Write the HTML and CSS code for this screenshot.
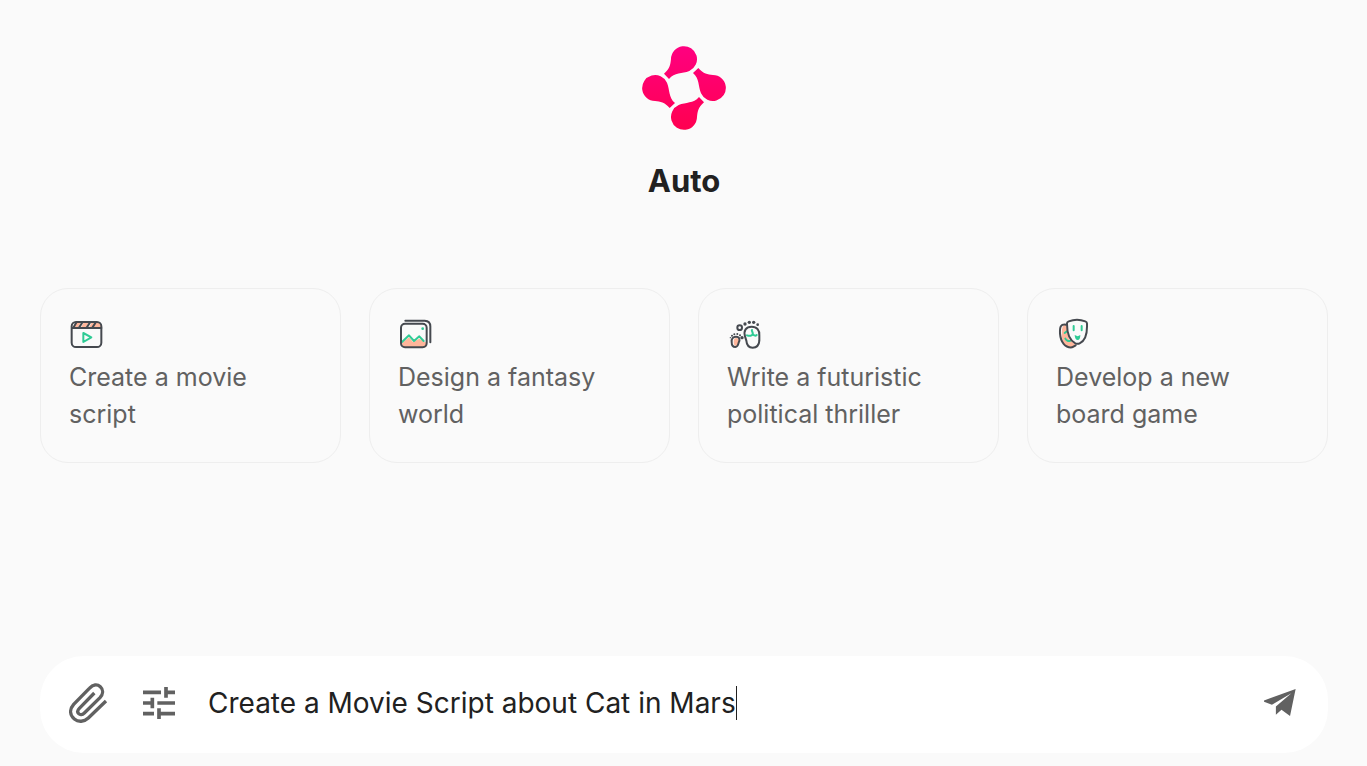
FILE: index.html
```html
<!DOCTYPE html>
<html lang="en">
<head>
<meta charset="utf-8">
<meta name="viewport" content="width=device-width, initial-scale=1">
<title>Auto</title>
<link rel="stylesheet" href="styles.css">
</head>
<body>
<main class="page">
  <header class="hero">
    <svg class="logo" viewBox="24 24 252 252" aria-hidden="true">
      <defs>
        <linearGradient id="pink" gradientUnits="userSpaceOnUse" x1="150" y1="24" x2="150" y2="276">
          <stop offset="0" stop-color="#ff0080"/>
          <stop offset="1" stop-color="#ff0050"/>
        </linearGradient>
        <clipPath id="petals">
          <path id="petal" d="M111 63A39 39 0 1 1 166 99C144 108 122 103 105 123L90 107C108 91 109 80 111 63Z"/>
          <use href="#petal" transform="rotate(90 150 150)"/>
          <use href="#petal" transform="rotate(180 150 150)"/>
          <use href="#petal" transform="rotate(270 150 150)"/>
        </clipPath>
      </defs>
      <rect x="24" y="24" width="252" height="252" fill="url(#pink)" clip-path="url(#petals)"/>
    </svg>
    <h1 class="title">Auto</h1>
  </header>

  <section class="cards" aria-label="Suggestions">
    <button class="card" type="button">
      <svg class="card-icon" viewBox="27 21 102 102" aria-hidden="true">
        <path class="peach" d="M36 54V47Q37 36 48 36H111Q123 37 124 54Z"/>
        <path class="paper" d="M36 48Q37 36 48 36L40 54H36ZM64 36H72L62 54H52ZM88 36H96L86 54H76Z"/>
        <path class="ink" d="M50 36L40 53M68 36L57 53M91 36L80 53M108 36L97 53M36 54H124"/>
        <rect class="ink" x="35" y="36" width="89" height="75" rx="13"/>
        <path class="mint" d="M70 69V96L94 82Z"/>
      </svg>
      <span class="card-text">Create a movie script</span>
    </button>
    <button class="card" type="button">
      <svg class="card-icon" viewBox="24 21 102 102" aria-hidden="true">
        <path class="peach" d="M36 99L57 82L69 96L88 86L109 98V111Q106 113 100 113H46Q37 112 36 99Z"/>
        <path class="mint" d="M36 96L57 76L72 93L88 79L101 93"/>
        <circle class="mint-fill" cx="98" cy="56" r="4"/>
        <rect class="ink" x="33" y="41" width="77" height="71" rx="12"/>
        <path class="ink" d="M46 32H104Q121 33 121 49V97"/>
      </svg>
      <span class="card-text">Design a fantasy world</span>
    </button>
    <button class="card" type="button">
      <svg class="card-icon" viewBox="21 21 102 102" aria-hidden="true">
        <ellipse class="peach" cx="49" cy="96" rx="8" ry="12"/>
        <path class="ink" d="M48 80C60 80 60 90 56 98C54 108 52 111 46 111C37 111 35 104 35 96C34 86 39 80 48 80Z"/>
        <path class="ink" d="M95 50C111 50 119 61 118 76V92C117 107 110 113 98 113C84 113 80 104 79 92L75 79C70 62 78 50 95 50Z"/>
        <path class="mint" d="M81 76C92 80 100 75 98 68C97 65 94 62 96 60M98 72C103 78 107 78 110 75"/>
        <circle class="ink" cx="59" cy="53" r="7"/>
        <g class="ink-fill"><circle cx="75" cy="42" r="5"/><circle cx="88" cy="37" r="5"/><circle cx="101" cy="37" r="5"/><circle cx="113" cy="44" r="4"/><circle cx="66" cy="83" r="5"/><circle cx="60" cy="76" r="3"/><circle cx="52" cy="72" r="3"/><circle cx="43" cy="73" r="3"/><circle cx="36" cy="77" r="3"/><circle cx="31" cy="83" r="2"/></g>
      </svg>
      <span class="card-text">Write a futuristic political thriller</span>
    </button>
    <button class="card" type="button">
      <svg class="card-icon" viewBox="18 21 102 102" aria-hidden="true">
        <path class="peach" d="M48 44C35 44 36 58 35 77C37 99 48 113 66 114Q77 113 78 106L57 88Z"/>
        <path class="mint" d="M49 65L44 69M46 86C49 92 56 95 61 92"/>
        <path class="ink" d="M48 44C32 42 29 49 30 71C32 96 45 114 66 112L77 106"/>
        <path class="mask" d="M51 42Q50 36 56 34C71 28 91 28 106 34Q112 36 111 43C112 72 107 92 89 100Q83 103 76 100C55 89 51 68 51 42Z"/>
        <path class="mint" d="M71 48V61M95 48V61"/>
        <path class="mint-fill" d="M74 75L83 79L91 75Q91 90 83 90T74 75Z"/>
      </svg>
      <span class="card-text">Develop a new board game</span>
    </button>
  </section>

  <form class="composer">
    <button class="icon-button" type="button" aria-label="Attach a file">
      <svg class="clip" viewBox="117 98 117 120" aria-hidden="true">
        <path d="M228 152L175 203C162 215 145 216 133 206C118 193 119 176 131 162L178 114C189 102 202 101 211 109C221 118 219 132 210 142L163 188C157 194 150 194 146 190C141 185 143 179 148 174L193 128"/>
      </svg>
    </button>
    <button class="icon-button" type="button" aria-label="Options">
      <svg class="sliders" viewBox="339 111 96 96" aria-hidden="true">
        <path d="M339 127H393M408 111V143M408 127H435M339 159H367M367 143V175M382 159H435M339 191H372M387 175V207M387 191H435"/>
      </svg>
    </button>
    <label class="field">
      <input class="prompt" type="text" aria-label="Message" value="Create a Movie Script about Cat in Mars">
      <span class="caret"></span>
    </label>
    <button class="icon-button" type="submit" aria-label="Send">
      <svg class="send" viewBox="129 118 97 82" aria-hidden="true">
        <path d="M225 118L208 200L182 181L165 196V171L212 131L153 166L129 157V153Z"/>
      </svg>
    </button>
  </form>
</main>
</body>
</html>
```
FILE: styles.css
```css
* { box-sizing: border-box; }

body {
  margin: 0;
  background: #fafafa;
  color: #212121;
  font-family: Inter, "Liberation Sans", sans-serif;
}

.page {
  display: flex;
  flex-direction: column;
  min-height: 100vh;
  padding: 46px 39px 13px 40px;
}

.hero {
  display: flex;
  flex-direction: column;
  align-items: center;
  gap: 31px;
}

.logo { width: 84px; height: 84px; }

.title {
  margin: 0;
  font-size: 31px;
  line-height: 40px;
  font-weight: 700;
}

.cards {
  display: grid;
  grid-template-columns: repeat(4, 1fr);
  gap: 28px;
  margin-top: 87px;
}

.card {
  display: flex;
  flex-direction: column;
  align-items: flex-start;
  gap: 8px;
  padding: 28px 28px 29px;
  border: 1px solid #eee;
  border-radius: 28px;
  background: transparent;
  color: #616161;
  font: 400 25px/37px Inter, "Liberation Sans", sans-serif;
  text-align: left;
  cursor: pointer;
}

.card-icon { width: 34px; height: 34px; }
.ink, .mint, .mask {
  fill: none;
  stroke: #45494f;
  stroke-width: 6;
  stroke-linecap: round;
  stroke-linejoin: round;
}
.mask { fill: #fafafa; }
.mint { stroke: #2fcb95; }
.ink-fill { fill: #45494f; }
.mint-fill { fill: #2fcb95; }
.peach { fill: #ffb69b; }
.paper { fill: #fafafa; }

.composer {
  display: flex;
  align-items: center;
  margin-top: auto;
  padding: 22px 28px 26px;
  border-radius: 44px;
  background: #fff;
}

.icon-button {
  display: grid;
  place-items: center;
  flex: none;
  min-width: 40px;
  height: 49px;
  padding: 0;
  border: 0;
  background: none;
  color: #616161;
  cursor: pointer;
}
.icon-button + .icon-button { margin-left: 31px; }

.clip { width: 39px; height: 40px; fill: none; stroke: currentColor; stroke-width: 10; }
.sliders { width: 32px; height: 32px; fill: none; stroke: currentColor; stroke-width: 11; }
.send { width: 32px; height: 27px; fill: currentColor; }

.field {
  display: flex;
  align-items: center;
  flex: 1;
  min-width: 0;
  margin-left: 29px;
}

.prompt {
  field-sizing: content;
  min-width: 0;
  padding: 0;
  border: 0;
  outline: 0;
  background: transparent;
  color: #212121;
  font: 400 28px/36px Inter, "Liberation Sans", sans-serif;
}

.caret { width: 1px; height: 34px; background: #212121; }
```
